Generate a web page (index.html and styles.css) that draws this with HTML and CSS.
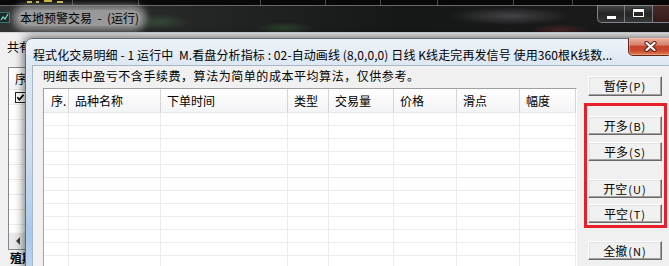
FILE: index.html
```html
<!DOCTYPE html>
<html lang="zh-CN">
<head>
    <meta charset="UTF-8">
    <meta name="viewport" content="width=device-width, initial-scale=1.0">
    <title>程式化交易明细</title>
    <link rel="stylesheet" href="styles.css">
</head>
<body>
    <div class="desk">
        <div class="chart-strip"></div>

        <div class="app">
            <div class="app-caption">
                <svg class="app-icon" width="11" height="11" viewBox="0 0 11 11">
                    <rect x="0" y="0" width="11" height="11" fill="#2f7f6a"/>
                    <rect x="1" y="1" width="9" height="9" fill="#1c2a30"/>
                    <path d="M2 8 L4 5 L6 7 L9 2" fill="none" stroke="#7fe0c0" stroke-width="1.2"/>
                </svg>
                <span class="app-title">本地预警交易 &nbsp;- &nbsp;(运行)</span>
                <div class="caption-btns">
                    <span class="cbtn cbtn-min"><i></i></span>
                    <span class="cbtn cbtn-max"><i></i></span>
                    <span class="cbtn cbtn-close"></span>
                </div>
            </div>
            <div class="app-body">
                <div class="app-count">共有</div>
                <div class="side-list">
                    <div class="side-head">序</div>
                    <div class="side-rows">
                        <div class="side-row">
                            <svg width="11" height="11" viewBox="0 0 11 11">
                                <rect x="0.5" y="0.5" width="10" height="10" fill="#fff" stroke="#222"/>
                                <path d="M2.3 5.3 L4.4 7.6 L8.6 2.8" fill="none" stroke="#000" stroke-width="1.7"/>
                            </svg>
                        </div>
                        <div class="side-row"></div>
                        <div class="side-row"></div>
                        <div class="side-row"></div>
                        <div class="side-row"></div>
                        <div class="side-row"></div>
                        <div class="side-row"></div>
                        <div class="side-row"></div>
                        <div class="side-row"></div>
                    </div>
                    <div class="side-scroll"><i class="arrow-left"></i></div>
                </div>
                <div class="app-foot">殖期</div>
            </div>
        </div>

        <div class="dialog">
            <div class="dlg-caption">
                <div class="dlg-title">程式化交易明细 - 1 运行中&nbsp; M.看盘分析指标 : 02-自动画线 (8,0,0,0) 日线 K线走完再发信号 使用360根K线数...</div>
                <div class="dlg-close">
                    <svg width="13" height="11" viewBox="0 0 13 11">
                        <path d="M2.5 2 L10.5 9 M10.5 2 L2.5 9" stroke="#5a1d14" stroke-width="4.2" stroke-linecap="round"/>
                        <path d="M2.5 2 L10.5 9 M10.5 2 L2.5 9" stroke="#fff" stroke-width="2.3" stroke-linecap="round"/>
                    </svg>
                </div>
            </div>
            <div class="dlg-client">
                <div class="ledger">
                    <div class="note">明细表中盈亏不含手续费，算法为简单的成本平均算法，仅供参考。</div>
                    <div class="listview">
                        <div class="lv-row lv-head">
                            <span>序.</span>
                            <span>品种名称</span>
                            <span>下单时间</span>
                            <span>类型</span>
                            <span>交易量</span>
                            <span>价格</span>
                            <span>滑点</span>
                            <span>幅度</span>
                        </div>
                        <div class="lv-body">
                            <div class="lv-row"><span></span><span></span><span></span><span></span><span></span><span></span><span></span><span></span></div>
                            <div class="lv-row"><span></span><span></span><span></span><span></span><span></span><span></span><span></span><span></span></div>
                            <div class="lv-row"><span></span><span></span><span></span><span></span><span></span><span></span><span></span><span></span></div>
                            <div class="lv-row"><span></span><span></span><span></span><span></span><span></span><span></span><span></span><span></span></div>
                            <div class="lv-row"><span></span><span></span><span></span><span></span><span></span><span></span><span></span><span></span></div>
                            <div class="lv-row"><span></span><span></span><span></span><span></span><span></span><span></span><span></span><span></span></div>
                            <div class="lv-row"><span></span><span></span><span></span><span></span><span></span><span></span><span></span><span></span></div>
                            <div class="lv-row"><span></span><span></span><span></span><span></span><span></span><span></span><span></span><span></span></div>
                            <div class="lv-row"><span></span><span></span><span></span><span></span><span></span><span></span><span></span><span></span></div>
                            <div class="lv-row"><span></span><span></span><span></span><span></span><span></span><span></span><span></span><span></span></div>
                            <div class="lv-row"><span></span><span></span><span></span><span></span><span></span><span></span><span></span><span></span></div>
                            <div class="lv-row"><span></span><span></span><span></span><span></span><span></span><span></span><span></span><span></span></div>
                        </div>
                    </div>
                </div>
                <div class="actions">
                    <button class="btn btn-pause">暂停<span class="key">(P)</span></button>
                    <div class="signals">
                        <button class="btn">开多<span class="key">(B)</span></button>
                        <button class="btn gap-sm">平多<span class="key">(S)</span></button>
                        <button class="btn gap-lg">开空<span class="key">(U)</span></button>
                        <button class="btn gap-xs">平空<span class="key">(T)</span></button>
                    </div>
                    <button class="btn btn-cancel">全撤<span class="key">(N)</span></button>
                </div>
            </div>
        </div>
    </div>
</body>
</html>
```

FILE: styles.css
```css
* {
    box-sizing: border-box;
}
body {
    margin: 0;
    font-family: "Noto Sans CJK SC", "Noto Sans", sans-serif;
    font-size: 12px;
    color: #000;
    background: #111;
}
.desk {
    position: relative;
    width: 669px;
    height: 266px;
    overflow: hidden;
}

/* chart window behind everything */
.chart-strip {
    height: 5px;
    background:
        linear-gradient(#c9b53a, #c9b53a) 27px 1px / 5px 2px no-repeat,
        linear-gradient(#c9b53a, #c9b53a) 36px 1px / 3px 2px no-repeat,
        linear-gradient(#c9b53a, #c9b53a) 44px 0 / 8px 2px no-repeat,
        linear-gradient(#c9b53a, #c9b53a) 57px 1px / 6px 2px no-repeat,
        linear-gradient(#4a4a4a, #4a4a4a) 72px 0 / 1px 100% no-repeat,
        linear-gradient(#4a4a4a, #4a4a4a) 138px 0 / 1px 100% no-repeat,
        linear-gradient(#4a4a4a, #4a4a4a) 260px 0 / 1px 100% no-repeat,
        linear-gradient(#4a4a4a, #4a4a4a) 325px 0 / 1px 100% no-repeat,
        linear-gradient(#4a4a4a, #4a4a4a) 380px 0 / 1px 100% no-repeat,
        linear-gradient(#4a4a4a, #4a4a4a) 437px 0 / 1px 100% no-repeat,
        linear-gradient(#4a4a4a, #4a4a4a) 513px 0 / 1px 100% no-repeat,
        linear-gradient(#4a4a4a, #4a4a4a) 572px 0 / 1px 100% no-repeat,
        #080808;
}

/* main window */
.app-caption {
    height: 27px;
    display: flex;
    align-items: flex-start;
    border-top: 1px solid #66696c;
    background:
        radial-gradient(ellipse 30px 8px at 160px 16px, rgba(70, 110, 70, 0.45), transparent),
        radial-gradient(ellipse 30px 6px at 285px 22px, rgba(60, 110, 60, 0.4), transparent),
        radial-gradient(ellipse 60px 9px at 510px 10px, rgba(120, 120, 125, 0.45), transparent),
        radial-gradient(ellipse 30px 6px at 560px 24px, rgba(140, 50, 50, 0.4), transparent),
        linear-gradient(90deg, #303131 0, #242625 30%, #161717 60%, #1b1b1c 100%);
}
.app-icon {
    margin: 6px 0 0 -1px;
}
.app-title {
    margin: 4px 0 0 8px;
    padding: 0 2px;
    line-height: 16px;
    color: #000;
    background: rgba(190, 190, 190, 0.75);
    border-radius: 8px;
    box-shadow: 0 0 7px 5px rgba(185, 185, 185, 0.7);
}
.caption-btns {
    margin: -1px 0 0 auto;
    display: flex;
    height: 18px;
    border: 1px solid rgba(170, 178, 188, 0.7);
    border-top: 0;
    border-right: 0;
    border-radius: 0 0 0 5px;
    overflow: hidden;
}
.cbtn {
    width: 27px;
    height: 17px;
    display: flex;
    align-items: center;
    justify-content: center;
    border-right: 1px solid rgba(160, 170, 180, 0.6);
    background: linear-gradient(rgba(255, 255, 255, 0.2), rgba(255, 255, 255, 0.05) 50%, rgba(255, 255, 255, 0.12));
}
.cbtn-max {
    width: 28px;
}
.cbtn-min i {
    display: block;
    width: 9px;
    height: 3px;
    margin-top: 7px;
    background: #fff;
    box-shadow: 0 0 0 1px #2a2a2a;
}
.cbtn-max i {
    display: block;
    width: 11px;
    height: 8px;
    margin-top: -1px;
    border: 1px solid #fff;
    border-top-width: 3px;
    box-shadow: 0 0 0 1px #2a2a2a, inset 0 0 0 1px #2a2a2a;
}
.cbtn-close {
    width: 16px;
    border-right: 0;
    background: linear-gradient(rgba(150, 70, 60, 0.35), rgba(90, 30, 25, 0.4));
}
.app-body {
    height: 234px;
    background: #f0f0f0;
    border-top: 1px solid #d4d8dc;
}
.app-count {
    padding: 6px 0 0 7px;
    line-height: 16px;
}
.side-list {
    width: 40px;
    height: 183px;
    margin: 12px 0 0 8px;
    display: flex;
    flex-direction: column;
    background: #fff;
    border: 1px solid #828790;
}
.side-head {
    height: 22px;
    padding-left: 6px;
    line-height: 21px;
    border-bottom: 1px solid #e3e3e3;
    background: linear-gradient(#fff, #f2f3f5);
}
.side-rows {
    flex: 1;
    overflow: hidden;
}
.side-row {
    height: 15px;
    padding-left: 6px;
    display: flex;
    align-items: center;
    border-bottom: 1px solid #ececec;
}
.side-scroll {
    height: 17px;
    padding-left: 7px;
    display: flex;
    align-items: center;
    background: #e9e9e9;
    border-top: 1px solid #f8f8f8;
}
.arrow-left {
    width: 0;
    height: 0;
    border-top: 4px solid transparent;
    border-bottom: 4px solid transparent;
    border-right: 4px solid #404040;
}
.app-foot {
    padding: 2px 0 0 10px;
    font-size: 12px;
    line-height: 12px;
    font-weight: bold;
}

/* detail dialog on top */
.dialog {
    position: absolute;
    left: 25px;
    top: 38px;
    width: 680px;
    height: 240px;
    padding-left: 6px;
    display: flex;
    flex-direction: column;
    border: 1px solid #5f6c7a;
    border-radius: 7px 0 0 0;
    background: linear-gradient(#eef3f9, #dbe6f2 12%, #d2e0ef 45%, #b6d1ee 70%, #a6c8ec 82%, #c0d7ef);
    box-shadow: 0 0 8px 2px rgba(0, 0, 0, 0.5);
}
.dlg-caption {
    height: 26px;
    display: flex;
    align-items: flex-start;
}
.dlg-title {
    width: 596px;
    flex-shrink: 0;
    padding: 8px 0 0 1px;
    line-height: 16px;
    letter-spacing: 0.1px;
    white-space: nowrap;
}
.dlg-close {
    width: 44px;
    height: 18px;
    flex-shrink: 0;
    margin-top: -1px;
    display: flex;
    align-items: center;
    justify-content: center;
    border: 1px solid #5e2519;
    border-top: 0;
    border-radius: 0 0 5px 5px;
    background: linear-gradient(#eab0a2, #d9806b 40%, #c4432c 50%, #c94a30 75%, #e2814f);
    box-shadow: inset 0 0 0 1px rgba(255, 200, 180, 0.45);
}
.dlg-client {
    flex: 1;
    display: flex;
    background: #f0f0f0;
    border-top: 1px solid #a8b6c6;
    border-left: 1px solid #a8b6c6;
}
.ledger {
    width: 544px;
    padding-left: 10px;
    display: flex;
    flex-direction: column;
}
.note {
    height: 22px;
    line-height: 20px;
    letter-spacing: 0.55px;
    white-space: nowrap;
}
.listview {
    flex: 1;
    width: 534px;
    overflow: hidden;
    background: #fff;
    border: 1px solid;
    border-color: #a0a0a0 #fff #fff #a0a0a0;
}
.lv-row {
    display: grid;
    grid-template-columns: 25px 92px 127px 41px 65px 63px 63px 56px;
}
.lv-head {
    height: 24px;
    line-height: 23px;
    border-bottom: 1px solid #e5e5e5;
    background: linear-gradient(#fff, #f3f4f6);
}
.lv-head span {
    padding-left: 6px;
    white-space: nowrap;
    overflow: hidden;
    border-right: 1px solid #d5d5d5;
}
.lv-head span:first-child {
    padding-left: 7px;
}
.lv-body .lv-row {
    height: 13px;
}
.lv-body span {
    border-right: 1px solid #ececec;
    border-bottom: 1px solid #ececec;
}
.actions {
    width: 83px;
    margin-left: 7px;
    display: flex;
    flex-direction: column;
    align-items: flex-start;
}
.btn {
    display: block;
    width: 74px;
    height: 19px;
    margin: 0 0 0 4px;
    padding: 0;
    font-family: "Noto Sans CJK SC", "Noto Sans", sans-serif;
    font-size: 12px;
    line-height: 16px;
    color: #000;
    text-align: center;
    background: #f0f0f0;
    border: 1px solid;
    border-color: #fff #696969 #696969 #fff;
    box-shadow: inset -1px -1px #a0a0a0, inset 1px 1px #e3e3e3;
}
.key {
    margin-left: 1px;
    font-size: 11px;
    letter-spacing: 1px;
}
.btn-pause {
    height: 20px;
    margin-top: 10px;
}
.signals {
    width: 83px;
    margin-top: 7px;
    padding: 10px 0 2px 1px;
    border: 3px solid #e5202b;
}
.signals .btn {
    margin-left: 0;
}
.gap-sm {
    margin-top: 7px !important;
}
.gap-lg {
    margin-top: 18px !important;
}
.gap-xs {
    margin-top: 6px !important;
}
.btn-cancel {
    margin-top: 13px;
}
```
